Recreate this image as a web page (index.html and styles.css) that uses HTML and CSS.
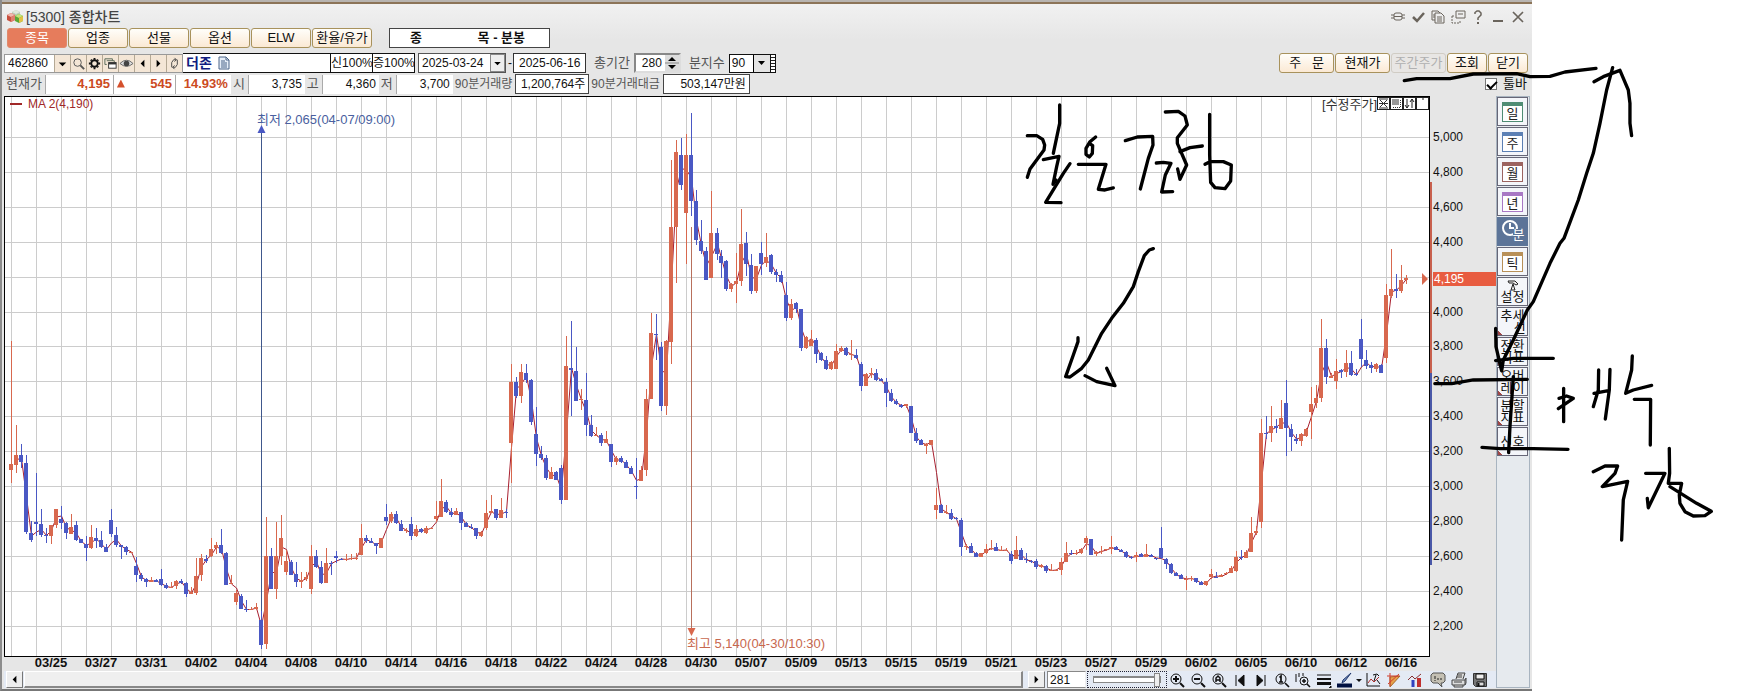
FILE: index.html
```html
<!DOCTYPE html>
<html lang="ko">
<head>
    <meta charset="UTF-8">
    <meta name="viewport" content="width=device-width, initial-scale=1.0">
    <title>[5300] 종합차트</title>
    <link rel="stylesheet" href="styles.css">
</head>
<body>
    <div class="page">
        <main class="window">
            <!-- Title bar -->
            <header class="title-bar">
                <svg class="logo" width="17" height="13" viewBox="0 0 17 13">
                    <path d="M5 2l4-2 4 2v4l-4 2-4-2z" fill="#b9c9b4"/><path d="M5 2l4 2 4-2-4-2z" fill="#dfe8da"/>
                    <path d="M0 5l4-2 4 2v5l-4 2-4-2z" fill="#c8503f"/><path d="M0 5l4 2 4-2-4-2z" fill="#f0b8ae"/><path d="M4 7l4-2v5l-4 2z" fill="#e0806e"/>
                    <path d="M8 6l4-2 4 2v5l-4 2-4-2z" fill="#59a636"/><path d="M8 6l4 2 4-2-4-2z" fill="#c4e47c"/><path d="M12 8l4-2v5l-4 2z" fill="#e2c244"/>
                </svg>
                <h1>[5300] 종합차트</h1>
                <div class="window-buttons">
                    <button aria-label="연결"><svg viewBox="0 0 16 16"><rect x="4" y="4" width="8" height="7" rx="2"/><path d="M1 6h3M1 9h3M12 6h3M12 9h3M4 7.500h8"/></svg></button>
                    <button aria-label="확인"><svg viewBox="0 0 16 16"><path d="M3 8l4 4 7-8" stroke-width="2.500"/></svg></button>
                    <button aria-label="복사"><svg viewBox="0 0 16 16"><path d="M5 11H2V2h6l2 2M5 4h6l3 3v7H5zM7 8h5M7 10h5M7 12h5M4 5v4"/></svg></button>
                    <button aria-label="분리"><svg viewBox="0 0 16 16"><path d="M6 2h9v7H6zM8 5h5"/><path d="M2 7h2M2 7v7h8v-3" stroke-dasharray="2 1"/></svg></button>
                    <button aria-label="도움말"><svg viewBox="0 0 16 16"><path d="M5 5V3.500L7 2h2l2 2v2L8 9v2" stroke-width="1.500"/><path d="M7 14h2" stroke-width="2"/></svg></button>
                    <button aria-label="최소화"><svg viewBox="0 0 16 16"><path d="M3 12h10" stroke-width="2"/></svg></button>
                    <button aria-label="닫기"><svg viewBox="0 0 16 16"><path d="M3 3l10 10M13 3L3 13" stroke-width="1.700"/></svg></button>
                </div>
            </header>

            <!-- Market tabs -->
            <nav class="tabs">
                <button class="btn tab active">종목</button>
                <button class="btn tab">업종</button>
                <button class="btn tab">선물</button>
                <button class="btn tab">옵션</button>
                <button class="btn tab">ELW</button>
                <button class="btn tab">환율/유가</button>
                <div class="mode"><span>종</span><span>목 - 분봉</span></div>
            </nav>

            <!-- Search row -->
            <section class="search-row">
                <div class="code">
                    <input type="text" value="462860" aria-label="종목코드">
                    <button class="mini" aria-label="목록"><svg viewBox="0 0 16 16"><path d="M4 7h8l-4 4z" fill="#000"/></svg></button>
                    <button class="mini" aria-label="검색"><svg viewBox="0 0 16 16"><circle cx="7" cy="7" r="4" fill="none" stroke="#555"/><path d="M10 10l4 4" stroke="#555" stroke-width="2"/></svg></button>
                    <button class="mini" aria-label="설정"><svg viewBox="0 0 16 16"><circle cx="8" cy="8" r="3.500" fill="none" stroke="#111" stroke-width="2"/><path d="M8 2v2M8 12v2M2 8h2M12 8h2M4 4l1 1M11 11l1 1M12 4l-1 1M4 12l1-1" stroke="#111" stroke-width="2"/></svg></button>
                    <button class="mini" aria-label="창"><svg viewBox="0 0 16 16"><path d="M4 9H2V3h8v2M4 5h8v2" fill="none" stroke="#565"/><rect x="6" y="7" width="8" height="6" fill="#fff" stroke="#333"/><path d="M6 8h8" stroke="#333" stroke-width="2"/></svg></button>
                    <button class="mini" aria-label="보기"><svg viewBox="0 0 16 16"><path d="M1 8q7-7 14 0q-7 6-14 0z" fill="#ddd" stroke="#666"/><circle cx="8" cy="8" r="3" fill="#444"/></svg></button>
                    <button class="mini" aria-label="이전"><svg viewBox="0 0 16 16"><path d="M10 4v8L6 8z" fill="#000"/></svg></button>
                    <button class="mini" aria-label="다음"><svg viewBox="0 0 16 16"><path d="M6 4v8l4-4z" fill="#000"/></svg></button>
                    <button class="mini" aria-label="새로고침"><svg viewBox="0 0 16 16"><path d="M5 12V7l2-3h3M11 4v5l-2 3H6M8 2l2 2-2 2M8 10l-2 2 2 2" fill="none" stroke="#444"/></svg></button>
                </div>
                <div class="name">
                    <strong>더존</strong>
                    <svg width="12" height="14" viewBox="0 0 12 14"><path d="M1 1h7l3 3v9H1zM8 1v3h3M3 5h4M3 7h6M3 9h6M3 11h6" fill="#e6eef8" stroke="#4a6488"/></svg>
                </div>
                <div class="ratio"><span>신</span><span>100%</span></div>
                <div class="ratio"><span>증</span><span>100%</span></div>
                <div class="date-from">
                    <input type="text" value="2025-03-24" aria-label="시작일">
                    <button class="drop" aria-label="달력"><svg viewBox="0 0 16 16"><path d="M4 6h8l-4 4z" fill="#000"/></svg></button>
                </div>
                <span>-</span>
                <input class="date-to" type="text" value="2025-06-16" aria-label="종료일">
                <label for="period">총기간</label>
                <div class="spinner">
                    <input type="text" id="period" value="280">
                    <svg width="14" height="16" viewBox="0 0 14 16"><path d="M0 0h14v16H0z" fill="#dcdcdc"/><path d="M0 8h14" stroke="#888"/><path d="M3 6h8L7 2zM3 10h8l-4 4z" fill="#000"/></svg>
                </div>
                <label for="minutes">분지수</label>
                <div class="minutes">
                    <select id="minutes"><option>90</option></select>
                    <svg width="17" height="17" viewBox="0 0 17 17"><path d="M0 0h17v17H0z" fill="#e4e4e4"/><path d="M0.500 0v17" stroke="#000"/><path d="M5 6h7l-3.500 4z" fill="#000"/></svg>
                    <span class="grip"></span>
                </div>
                <div class="actions">
                    <button class="btn wide">주&nbsp;&nbsp; 문</button>
                    <button class="btn wide">현재가</button>
                    <button class="btn wide" disabled>주간주가</button>
                    <button class="btn">조회</button>
                    <button class="btn">닫기</button>
                </div>
            </section>

            <!-- Quote row -->
            <section class="quote-row">
                <span class="caption">현재가</span>
                <output class="cell price">4,195</output>
                <output class="cell price change"><i class="up"></i>545</output>
                <output class="cell price rate">14.93%</output>
                <span class="caption">시</span>
                <output class="cell">3,735</output>
                <span class="caption">고</span>
                <output class="cell">4,360</output>
                <span class="caption">저</span>
                <output class="cell">3,700</output>
                <span class="caption long">90분거래량</span>
                <output class="cell boxed volume">1,200,764주</output>
                <span class="caption long">90분거래대금</span>
                <output class="cell boxed amount">503,147만원</output>
                <label class="toolbar-toggle"><input type="checkbox" checked>툴바</label>
            </section>

            <!-- Chart and tool strip -->
            <div class="body-row">
                <div class="chart-column">
                    <div class="chart-box">
                        <svg id="chart" class="chart" role="img" aria-label="분봉 차트"></svg>
                        <div class="legend">MA 2(4,190)</div>
                        <div class="adjusted">
                            <span>[수정주가]</span>
                            <button aria-label="축소"><svg viewBox="0 0 11 11"><path d="M1 1h9M1 10h9M2 2l7 7M9 2L2 9M1 5.500h9" stroke="#333" fill="none"/></svg></button>
                            <button aria-label="그림자"><svg viewBox="0 0 11 11"><rect x="1" y="1" width="7" height="6" fill="#999"/><path d="M9.500 2v7.500H2" stroke="#333" fill="none" stroke-dasharray="1 1"/></svg></button>
                            <button aria-label="정렬"><svg viewBox="0 0 11 11"><path d="M3 1v9M1 7l2 3 2-3M8 10V1M6 4l2-3 2 3" stroke="#222" fill="none"/></svg></button>
                            <button aria-label="최대화"><svg viewBox="0 0 11 11"><path d="M5 1h2" stroke="#222"/></svg></button>
                        </div>
                    </div>

                    <footer class="bottom-bar">
                        <button class="scroll-btn" aria-label="왼쪽"><svg viewBox="0 0 16 16"><path d="M10 4v8L6 8z" fill="#000"/></svg></button>
                        <div class="scroll-thumb"></div>
                        <button class="scroll-btn" aria-label="오른쪽"><svg viewBox="0 0 16 16"><path d="M6 4v8l4-4z" fill="#000"/></svg></button>
                        <input class="count" type="text" value="281" aria-label="봉 개수">
                        <input class="zoom" type="range" value="100" aria-label="확대">
                        <div class="chart-tools">
                            <button aria-label="확대"><svg viewBox="0 0 16 16"><circle cx="7" cy="7" r="5"/><path d="M4 7h6M7 4v6" stroke-width="2"/><path d="M11 11l4 4" stroke-width="2"/></svg></button>
                            <button aria-label="축소"><svg viewBox="0 0 16 16"><circle cx="7" cy="7" r="5"/><path d="M4 7h6M11 11l4 4" stroke-width="2"/></svg></button>
                            <button aria-label="전체"><svg viewBox="0 0 16 16"><circle cx="7" cy="7" r="5"/><path d="M5 10V6l2-2 2 2v4M5 8h4" stroke-width="1.500"/><path d="M11 11l4 4" stroke-width="2"/></svg></button>
                            <button aria-label="처음"><svg viewBox="0 0 16 16"><path d="M4 3v11"/><path d="M12 3v11L6 8.500z" fill="#111"/></svg></button>
                            <button aria-label="마지막"><svg viewBox="0 0 16 16"><path d="M12 3v11"/><path d="M4 3v11l6-5.500z" fill="#111"/></svg></button>
                            <button aria-label="원래대로"><svg viewBox="0 0 16 16"><circle cx="7" cy="7" r="5"/><path d="M5.500 5.500L7 4v6M5 10h4M11 11l4 4" stroke-width="1.700"/></svg></button>
                            <button aria-label="구간 확대"><svg viewBox="0 0 16 16"><path d="M1 2v8M4 1v4M8 1v3"/><circle cx="9" cy="9" r="4"/><path d="M7 9h4M9 7v4M12 12l3 3" stroke-width="1.500"/></svg></button>
                            <button aria-label="선 굵기"><svg viewBox="0 0 16 16"><path d="M1 3h14"/><path d="M1 7h14" stroke-width="2"/><path d="M1 11.500h14" stroke-width="3"/><path d="M15 14v2h-2z" fill="#111"/></svg></button>
                            <button aria-label="펜"><svg viewBox="0 0 16 16"><path d="M0 13.500h15" stroke="#001040" stroke-width="4"/><path d="M14 1L8 9l-3 2 1-3z" stroke="#20386c" fill="#7890c0"/></svg></button>
                            <button class="narrow" aria-label="펜 색"><svg viewBox="0 0 6 16"><path d="M0 7h6L3 10z" fill="#111" stroke="none"/></svg></button>
                            <button aria-label="차트 설정"><svg viewBox="0 0 16 16"><path d="M2 1v13h13"/><path d="M3 11l3-4 3 3 5-5" stroke="#b03030"/><path d="M8 3l4-1 2 2M11 3l-2 6M12 8l3 4"/></svg></button>
                            <button aria-label="작도"><svg viewBox="0 0 16 16"><path d="M4 15V5l10-1z" fill="#e6a24a" stroke="#a8682c"/><path d="M1 4h12M4 1v13M2 12L13 2" stroke="#d04030"/></svg></button>
                            <button aria-label="지표"><svg viewBox="0 0 16 16"><path d="M1 8l4-4 3 3 6-5" stroke="#883030"/><path d="M6 8v7" stroke="#3040c0" stroke-width="3"/><path d="M12 6v9" stroke="#c03030" stroke-width="4"/></svg></button>
                            <button class="spaced" aria-label="메모"><svg viewBox="0 0 16 16"><path d="M3 1h10l2 2v6l-2 2h-2l1 4-4-4H3L1 9V3z" fill="#c4c0b4" stroke="#555"/><path d="M5 4v3M5 8v1M7 7h2M10 7h2" stroke="#222"/></svg></button>
                            <button aria-label="인쇄"><svg viewBox="0 0 16 16"><path d="M5 7l2-6h7l-2 6M1 8h13v5H1zM3 13v2h9v-2M14 8l1-2v5l-1 2M7 3h4M6 5h5M3 10h8" fill="#ddd" stroke="#444"/></svg></button>
                            <button aria-label="저장"><svg viewBox="0 0 16 16"><path d="M1.500 1.500h13v13h-11l-2-2z" fill="#777" stroke="#333"/><path d="M4 2h8v5H4z" fill="#eee"/><path d="M5 10h7v4H5z" fill="#ddd"/><path d="M6.500 11v3" stroke-width="2"/></svg></button>
                        </div>
                    </footer>
                </div>

                <aside class="tool-strip">
                    <button class="cal green"><span>일</span></button>
                    <button class="cal blue"><span>주</span></button>
                    <button class="cal red"><span>월</span></button>
                    <button class="cal purple"><span>년</span></button>
                    <button class="cal minute">
                        <svg width="18" height="18" viewBox="0 0 18 18"><circle cx="9" cy="9" r="7" fill="none" stroke="#fff" stroke-width="2"/><path d="M9 4v5h4" fill="none" stroke="#fff" stroke-width="2"/></svg>
                        <span>분</span>
                    </button>
                    <button class="cal tick"><span>틱</span></button>
                    <button class="tool">
                        <svg width="12" height="11" viewBox="0 0 12 11"><path d="M1 1h7l3 3-2 1-3-2H2zM6 4L4 10h4L6 4" fill="#eee" stroke="#222"/></svg>
                        설정
                    </button>
                    <button class="tool more">추세<br>&nbsp;&nbsp;&nbsp;&nbsp;선</button>
                    <button class="tool more">전환<br>지표</button>
                    <button class="tool more">오버<br>레이</button>
                    <button class="tool more">분할<br>지표</button>
                    <button class="tool more">신호</button>
                </aside>
            </div>
        </main>
    </div>

    <!-- Pen layer over the whole page -->
    <svg class="ink" viewBox="0 0 1759 691" aria-hidden="true">
        <g transform="translate(1010 95) scale(.3333)">
            <path d="M52 122L80 122 98 133 104 150 102 165 60 222 52 247"/>
            <path d="M149 30V85L130 175"/>
            <path d="M100 194L147 184 140 215 129 268 138 255"/>
            <path d="M180 206L160 235 107 322 153 323"/>
            <path d="M257 126L240 140 228 160 228 178 238 186 247 175 248 152 238 145"/>
            <path d="M205 208H288L265 283 285 285 310 279"/>
            <path d="M346 137L382 126 428 124 429 150 415 190 402 240 391 282"/>
            <path d="M439 204L460 202 483 205 466 240 455 291 488 290"/>
            <path d="M466 51L505 49 525 63 532 90 502 128 502 145 530 210 510 253 503 222"/>
            <path d="M510 170L540 158 577 153"/>
            <path d="M599 58V180L602 262 615 278 645 281 662 258 664 210 640 200 600 200 585 208"/>
            <path d="M430 461L418 465 403 482 385 530 370 575 340 625 305 670 275 715 235 795 215 820 180 846 167 845 190 780 204 740 204 728"/>
            <path d="M225 842L260 860 315 872 290 820"/>
        </g>
        <g transform="translate(1240 0) scale(.3333)">
            <path d="M493 242L530 236 630 236 700 222 830 221 870 230 930 229 975 216 1068 205"/>
            <path d="M1062 245L1090 230 1140 211 1165 270 1170 310 1170 370 1175 407"/>
        </g>
        <g transform="translate(1300 90) scale(.3333)">
            <path d="M938 -67L920 0 900 100 880 190 860 250 835 330 792 445 780 460 750 520 700 635 682 660 640 750 610 810 605 843 588 770 587 715"/>
            <path d="M587 812L640 805 760 805"/>
            <path d="M405 881L455 881 520 870 682 868"/>
        </g>
        <g transform="translate(1300 340) scale(.3333)">
            <path d="M640 110L630 260 626 338"/>
            <path d="M546 322L600 326 700 326 804 328"/>
            <path d="M791 145V245M777 175L800 168 820 175 775 206"/>
            <path d="M896 90L895 150 880 200M930 88L928 150 916 237M882 160L925 152"/>
            <path d="M997 48L995 90 977 160 1000 150 1055 136M1003 178H1052L1051 315"/>
            <path d="M880 395L915 378 953 378 945 400 907 440 983 424 970 480 965 600"/>
            <path d="M1108 325L1109 400 1105 430 1145 430 1138 465 1140 490 1155 515 1180 528 1215 527 1234 514 1190 490 1110 440"/>
            <path d="M1037 400H1095L1045 503 1042 475"/>
        </g>
    </svg>

    <script src="script.js"></script>
</body>
</html>
```

FILE: styles.css
```css
* {
    box-sizing: border-box;
}
body {
    margin: 0;
    background: #fff;
    color: #111;
    font-family: "Liberation Sans", "Noto Sans CJK KR", sans-serif;
    font-size: 12px;
    line-height: 16px;
    position: relative;
}
button, input, select {
    font: inherit;
    color: inherit;
    margin: 0;
    padding: 0;
    border: 0;
    background: none;
    border-radius: 0;
    min-width: 0;
}
svg {
    display: block;
}
.page {
    display: grid;
    grid-template-columns: 27fr 4fr;
}
.window {
    min-width: 0;
    border-left: 2px solid #8c8c8c;
    border-bottom: 2px solid #777;
    background: linear-gradient(#f2f2f2, #e6e6e6 40px);
    padding: 0 2px 1px;
}

/* Title bar */
.title-bar {
    display: flex;
    align-items: center;
    gap: 2px;
    height: 28px;
    margin: 0 -2px;
    padding: 3px 6px 0 5px;
    border-top: 2px solid #b8b4b0;
    box-shadow: inset 0 2px 0 #8c7458;
}
.title-bar h1 {
    margin: 0;
    font-size: 14px;
    font-weight: 500;
    color: #444;
}
.window-buttons {
    display: flex;
    gap: 4px;
    margin-left: auto;
}
.window-buttons svg {
    width: 16px;
    height: 16px;
    fill: none;
    stroke: #6a645c;
}

/* Buttons */
.btn {
    height: 20px;
    width: 40px;
    border: 1px solid #a8925c;
    border-radius: 3px;
    background: linear-gradient(#fffefa, #fbe9d4);
    font-size: 13px;
    line-height: 16px;
    white-space: nowrap;
}
.btn.wide {
    width: 55px;
}
.btn.tab {
    width: 60px;
}
.btn.active {
    background: #e67c5c;
    border-color: #e08a6c;
    color: #fff;
}
.btn:disabled {
    background: #e8e6e4;
    border-color: #d0ccc4;
    color: #b0b0b0;
}
.tabs {
    display: flex;
    gap: 1px;
    padding-left: 3px;
}
.mode {
    display: flex;
    justify-content: space-between;
    width: 161px;
    height: 20px;
    margin-left: 16px;
    padding: 1px 24px 0 20px;
    background: #fff;
    border: 1px solid #444;
    font-size: 13px;
    font-weight: bold;
}

/* Search row */
.search-row {
    display: flex;
    align-items: center;
    height: 20px;
    margin-top: 5px;
    color: #111;
}
.search-row label {
    margin: 0 4px 0 8px;
    color: #555;
    font-size: 13px;
}
.code {
    display: flex;
    height: 19px;
    border: 1px solid #999;
    background: #fff;
}
.code input {
    width: 49px;
    padding-left: 3px;
}
.mini {
    width: 16px;
    height: 17px;
    border-left: 1px solid #b4a894;
    background: #f4e6d6;
}
.mini svg, .drop svg {
    width: 15px;
    height: 15px;
}
.name, .ratio {
    display: flex;
    align-items: center;
    height: 20px;
    border: 1px solid #111;
    background: #fff;
}
.name {
    width: 148px;
    gap: 6px;
    padding-left: 3px;
    border-left: 0;
}
.name strong {
    color: #101c80;
    font-size: 14px;
}
.ratio {
    width: 42px;
    justify-content: space-between;
    border-left: 0;
    white-space: nowrap;
}
.date-from {
    display: flex;
    width: 88px;
    height: 20px;
    margin: 0 2px 0 3px;
    border: 1px solid #555;
    background: #fff;
}
.date-from input {
    flex: 1;
    padding-left: 3px;
}
.drop {
    width: 15px;
    border: 1px solid #888;
    background: #eee;
}
.drop svg {
    width: 13px;
}
.date-to {
    width: 73px;
    height: 20px;
    margin-left: 1px;
    padding-left: 5px;
    border: 1px solid #333;
    background: #fff;
}
.spinner {
    display: flex;
    width: 47px;
    height: 20px;
    border: 2px solid #888;
    border-right-color: #ddd;
    border-bottom-color: #ddd;
    background: #fff;
}
.spinner input {
    flex: 1;
    padding-right: 3px;
    text-align: right;
}
.minutes {
    display: flex;
    width: 47px;
    height: 19px;
    border: 1px solid #111;
    background: #fff;
}
.minutes select {
    flex: 1;
    appearance: none;
    padding-left: 2px;
}
.grip {
    width: 5px;
    border-left: 1px solid #111;
    background: repeating-linear-gradient(#fff 0 2px, #222 2px 3px);
}
.search-row .minutes {
    margin-right: auto;
}
.actions {
    display: flex;
    gap: 1px;
    padding-right: 2px;
}

/* Quote row */
.quote-row {
    display: flex;
    align-items: center;
    height: 20px;
    margin-top: 1px;
}
.caption {
    padding: 0 3px 0 2px;
    color: #555;
    font-size: 13px;
    white-space: nowrap;
}
.caption.long {
    font-size: 12px;
}
.cell {
    width: 57px;
    height: 19px;
    padding: 1px 3px 0 0;
    background: #fff;
    border-left: 1px solid #aaa;
    text-align: right;
    white-space: nowrap;
}
.price {
    width: 68px;
    color: #cc4a22;
    font-size: 13px;
    font-weight: bold;
}
.change {
    display: flex;
    justify-content: space-between;
    width: 62px;
    padding-left: 3px;
}
.rate {
    width: 56px;
}
.up {
    margin-top: 4px;
    width: 8px;
    height: 8px;
    background: #d4502c;
    clip-path: polygon(50% 0, 100% 100%, 0 100%);
}
.boxed {
    height: 20px;
    border: 1px solid #444;
}
.volume {
    width: 74px;
}
.amount {
    width: 87px;
}
.toolbar-toggle {
    display: flex;
    align-items: center;
    gap: 6px;
    margin-left: auto;
    padding-right: 3px;
    font-size: 13px;
}
.toolbar-toggle input {
    appearance: none;
    width: 12px;
    height: 12px;
    border: 1px solid #777;
    background: #fff;
}
.toolbar-toggle input:checked::before {
    content: "";
    display: block;
    width: 8px;
    height: 4px;
    margin: 2px 0 0 1px;
    border: solid #000;
    border-width: 0 0 2px 2px;
    transform: rotate(-45deg);
}

/* Chart */
.body-row {
    display: flex;
    margin-top: 2px;
}
.chart-column {
    flex: 1;
    min-width: 0;
}
.chart-box {
    position: relative;
}
.chart {
    width: 100%;
    height: 575px;
    overflow: visible;
}
.chart text {
    font-size: 12px;
    fill: #111;
}
.chart .date {
    font-size: 13px;
    font-weight: bold;
    text-anchor: middle;
}
.chart .low-note {
    font-size: 13px;
    fill: #4a5fa0;
}
.chart .high-note {
    font-size: 13px;
    fill: #c8684e;
}
.chart .tag {
    fill: #fff;
}
.legend {
    position: absolute;
    left: 6px;
    top: 0;
    display: flex;
    align-items: center;
    gap: 6px;
    color: #a02828;
}
.legend::before {
    content: "";
    width: 12px;
    height: 2px;
    background: #a02828;
}
.adjusted {
    position: absolute;
    right: 67px;
    top: 1px;
    display: flex;
    color: #333;
    font-size: 13px;
}
.adjusted button {
    width: 13px;
    height: 13px;
    border: 1px solid #222;
    background: #fff;
}

/* Bottom bar */
.bottom-bar {
    display: flex;
    align-items: center;
    height: 17px;
    padding-left: 2px;
    background: #e4eaf4;
}
.scroll-btn {
    width: 17px;
    height: 17px;
    border: 1px solid #fff;
    border-right-color: #777;
    border-bottom-color: #777;
    background: #eee;
}
.scroll-btn svg {
    width: 15px;
    height: 15px;
}
.scroll-thumb {
    flex: 1;
    height: 17px;
    margin: 0 5px 0 1px;
    border: 1px solid #fff;
    border-right: 2px solid #888;
    border-bottom: 2px solid #888;
    background: #efefef;
}
.count {
    width: 39px;
    height: 17px;
    margin: 0 1px 0 2px;
    padding-left: 2px;
    border: 1px solid #888;
    border-right-color: #eee;
    background: #fff;
}
.zoom {
    appearance: none;
    width: 80px;
    height: 17px;
    padding: 0 5px;
    border: 1px dotted #223;
}
.zoom::-webkit-slider-runnable-track {
    height: 7px;
    border: 1px solid #888;
    border-top-width: 2px;
    background: #fff;
}
.zoom::-webkit-slider-thumb {
    appearance: none;
    width: 6px;
    height: 14px;
    margin-top: -5px;
    border: 1px solid #888;
    background: #eee;
}
.chart-tools {
    display: flex;
    gap: 5px;
    padding: 0 8px 0 2px;
}
.chart-tools button {
    width: 16px;
    height: 16px;
}
.chart-tools .narrow {
    width: 6px;
    margin: 0 -2px;
}
.chart-tools .spaced {
    margin-left: 2px;
}
.chart-tools svg {
    width: 100%;
    height: 16px;
    fill: none;
    stroke: #111;
}

/* Tool strip */
.tool-strip {
    display: flex;
    flex-direction: column;
    gap: 1px;
    width: 34px;
    border: 1px solid #a8b4c0;
    background: #e6eaee;
}
.tool-strip button {
    flex: none;
    display: flex;
    flex-direction: column;
    align-items: center;
    justify-content: center;
    width: 31px;
    height: 29px;
    border: 1px solid #667;
    background: #f4f6fa;
    font-size: 13px;
    line-height: 12px;
}
.cal span {
    width: 21px;
    height: 20px;
    padding-top: 2px;
    border: 1px solid;
    border-top-width: 4px;
    background: #fff;
    border-color: var(--tone);
    color: #222;
}
.green { --tone: #4f8c74; }
.blue { --tone: #5c80b4; }
.red { --tone: #9c6460; }
.purple { --tone: #a878c4; }
.tick { --tone: #b89058; }
.tool-strip .minute {
    flex-direction: row;
    align-items: flex-start;
    background: #5c7498;
    border-color: #5c7498;
}
.minute span {
    width: auto;
    height: auto;
    margin: 11px 0 0 -6px;
    padding: 0;
    border: 0;
    background: #5c7498;
    color: #fff;
}
.minute svg {
    flex: none;
    margin-top: 1px;
}
.tool-strip .more {
    background: linear-gradient(45deg, #a04848 3px, #f4f6fa 3px);
}

/* Pen layer */
.ink {
    position: absolute;
    left: 0;
    top: 0;
    width: 100%;
    pointer-events: none;
    fill: none;
    stroke: #000;
    stroke-width: 10;
    stroke-linecap: round;
    stroke-linejoin: round;
}
```

FILE: script.js
```js
// Each candle: direction (u/d), then high, body top, body bottom, low in chart units
const candles = `
u341,464,470,483 u425,455,465,473 d444,455,462,468 d455,463,532,534 d521,533,540,542
d473,522,524,536 d509,524,535,537 d528,535,536,543 u525,525,536,544 u509,509,525,528
d506,519,523,529 d522,523,533,539 u514,527,534,534 d521,525,540,541 d539,539,543,543
d536,544,548,561 u525,537,548,549 d528,538,541,548 d531,540,547,548 d544,547,552,552
d509,520,534,537 d527,535,545,547 d545,545,547,559 d546,547,552,555 u552,552,553,553
d557,566,575,582 d573,575,579,581 d578,579,582,587 u577,580,582,582 d579,580,582,582
d569,579,585,586 d583,585,588,589 u582,587,588,588 u580,581,586,589 d579,581,583,584
d582,583,594,597 u587,592,594,594 u558,576,593,595 u554,558,575,581 d555,559,561,563
u538,549,556,557 u542,545,548,554 d529,545,553,554 d552,553,585,585 u575,583,584,584
u590,593,602,605 d594,596,609,609 d600,609,610,612 u607,609,610,610 u603,607,609,610
d611,620,645,649 u517,556,644,649 d548,556,589,589 u522,556,589,599 u515,538,556,565
u550,561,572,575 d560,562,575,575 d562,574,582,587 u572,580,582,588 u572,577,579,581
u545,556,589,594 d550,556,567,568 d561,567,583,584 u548,563,583,583 d561,563,564,575
d551,556,558,563 d558,559,560,560 u554,559,560,561 u554,558,559,560 u553,558,559,560
u524,538,555,555 d535,538,541,543 d538,541,543,543 d543,543,546,554 u538,538,548,548
d504,517,521,525 u512,514,521,523 d511,514,523,524 d520,524,531,531 u528,530,531,533
d517,524,536,540 u525,529,536,537 d528,529,532,533 u526,528,533,534 u528,528,529,529
u501,516,519,522 u479,501,517,517 d500,502,512,513 d508,512,515,517 u508,511,515,515
d512,512,523,530 d522,523,527,527 d524,527,528,529 d528,528,536,539 u531,532,536,537
u500,513,528,530 u495,511,513,513 d509,509,518,520 u498,510,518,518 d509,512,513,518
u364,382,443,483 d377,382,396,398 u364,372,396,403 d364,373,380,383 d379,380,422,425
d407,434,454,466 d446,454,458,460 d455,458,478,480 u467,472,479,479 d471,472,480,480
d465,468,500,504 u336,366,500,500 d321,368,370,416 d347,371,401,401 u389,399,400,410
d373,400,425,436 d415,425,436,437 u427,435,436,436 d433,435,443,446 u431,439,443,443
d444,444,462,467 u456,458,462,465 d456,458,462,463 d460,462,468,468 d466,468,474,474
d458,486,487,499 u466,470,481,481 u389,399,470,476 u313,333,399,399 d314,334,335,360
d342,347,406,411 u340,341,406,415 u160,227,342,364 u140,152,227,283 d138,155,185,190
u134,155,213,264 d113,155,201,216 d190,201,240,245 d220,241,251,254 d247,251,280,280
u191,233,278,278 d228,233,254,260 d250,256,263,278 d260,261,289,291 u283,284,289,292
u253,281,284,303 u209,244,281,286 d232,243,264,276 d254,265,291,294 u266,266,291,293
d242,253,264,275 u233,257,263,267 d254,255,272,274 d269,272,275,282 d271,275,282,283
d282,295,318,321 u299,304,318,320 d302,303,309,313 d309,309,348,351 u336,337,348,349
u330,340,346,346 d338,340,354,363 d352,353,360,361 d356,360,369,370 u361,362,369,370
u344,351,369,369 u346,348,351,352 d347,348,355,356 u340,354,355,360 d349,355,358,359
d362,364,386,391 u373,374,386,386 u368,373,374,378 d369,373,380,381 d378,379,381,381
d378,382,393,407 d389,393,401,402 d399,401,404,405 d404,405,407,408 u404,404,406,408
d406,406,433,433 d428,433,441,443 d439,440,445,445 u443,444,446,454 u440,440,445,445
u488,505,510,519 d504,505,513,513 u505,512,513,514 d509,513,519,520 d517,518,519,520
d518,520,547,556 u544,546,547,550 d543,546,553,553 d552,553,557,557 u553,553,557,557
u544,549,553,554 u540,548,549,550 d543,547,551,551 u546,550,551,551 u548,550,551,551
d551,554,561,564 u536,550,559,559 d548,550,560,560 d553,559,560,563 d560,561,562,563
d559,561,567,569 u564,565,567,568 d565,566,571,573 u564,570,571,571 u569,570,571,571
u558,562,570,575 u542,553,562,562 d550,553,554,555 u550,553,554,555 u548,549,553,554
u536,538,543,550 d539,539,555,555 u551,552,554,556 u546,551,552,554 u549,549,550,551
u536,547,549,554 d546,547,550,550 d549,550,552,552 d551,552,557,558 d556,557,558,559
u552,555,557,562 d553,554,557,557 u544,554,557,557 d554,555,557,557 d558,558,559,560
d527,548,558,559 d558,559,564,569 d563,564,573,574 d572,573,576,576 d574,575,579,579
u576,579,580,590 u576,578,579,581 d578,578,582,583 d581,582,585,585 u581,581,585,586
u569,574,577,579 d572,577,578,578 u574,575,577,577 u572,573,574,575 u566,568,573,573
u551,557,571,572 d550,557,558,560 u550,552,558,558 u517,533,552,552 u526,531,533,535
u419,433,522,528 d416,433,434,439 u406,426,433,442 d419,426,428,433 u400,418,429,429
d380,403,428,456 d424,429,437,451 d434,439,441,444 u433,434,441,446 u428,429,436,437
u387,404,412,439 u385,398,403,408 u319,348,398,402 d339,348,377,384 u373,376,378,378
u359,371,381,389 d369,370,372,378 u350,363,372,377 d351,363,375,376 d369,374,375,376
d319,339,359,367 d350,360,366,369 d362,365,368,373 u363,364,369,372 d364,365,373,373
u284,295,358,363 u249,289,296,298 d274,289,291,298 u265,280,291,293 u275,278,280,284
`.trim().split(/\s+/).map(function (row) {
    const v = row.slice(1).split(',').map(Number);
    return { up: row[0] === 'u', high: v[0], top: v[1], bottom: v[2], low: v[3] };
});

const dates = ['03/25', '03/27', '03/31', '04/02', '04/04', '04/08', '04/10', '04/14', '04/16', '04/18',
    '04/22', '04/24', '04/28', '04/30', '05/07', '05/09', '05/13', '05/15', '05/19', '05/21',
    '05/23', '05/27', '05/29', '06/02', '06/05', '06/10', '06/12', '06/16'];

const RED = '#d8684e';
const BLUE = '#4a58c4';
const AXIS_W = 66;
const PLOT_H = 561;
const TOP = 96;

const svg = document.getElementById('chart');

function add(tag, attrs, text) {
    const el = document.createElementNS('http://www.w3.org/2000/svg', tag);
    for (const key in attrs) el.setAttribute(key, attrs[key]);
    if (text) el.textContent = text;
    svg.appendChild(el);
}

function rect(x, y, w, h, fill) {
    add('rect', { x: x, y: y, width: w, height: h, fill: fill, 'shape-rendering': 'crispEdges' });
}

function draw() {
    svg.innerHTML = '';
    const plotW = Math.round(svg.clientWidth - AXIS_W);
    const scale = plotW / 1427;
    const xOf = i => Math.round((7 + 5 * i + (i > 140 ? 1 : 0)) * scale);
    const yOf = price => Math.round(137 - TOP + (5000 - price) * 0.1745);

    rect(0, 0, plotW, PLOT_H, '#fff');

    // Grid
    for (let i = 0; i < candles.length; i += 5) rect(xOf(i), 0, 1, PLOT_H, '#ccc');
    for (let p = 5000; p >= 2200; p -= 200) {
        rect(0, yOf(p), plotW, 1, '#ccc');
        add('text', { x: plotW + 3, y: yOf(p) + 4 }, p.toLocaleString('en-US'));
    }

    // Moving average of the last two closes
    const closes = candles.map(c => (c.up ? c.top : c.bottom) - TOP);
    const points = closes.slice(1).map((y, i) => (xOf(i + 1) + 0.5) + ',' + (y + closes[i]) / 2);
    add('polyline', { points: points.join(' '), fill: 'none', stroke: '#a82030' });

    // Candles
    candles.forEach(function (c, i) {
        const color = c.up ? RED : BLUE;
        rect(xOf(i), c.high - TOP, 1, c.low - c.high, color);
        rect(xOf(i) - 2, c.top - TOP, 4, c.bottom - c.top, color);
    });

    // Lowest and highest price markers
    const lowX = xOf(50);
    rect(lowX, 30, 1, 485, '#40588c');
    add('path', { d: `M${lowX - 3.5} 37h8l-4-8z`, fill: BLUE });
    add('text', { x: lowX - 4, y: 28, class: 'low-note' }, '최저 2,065(04-07/09:00)');
    const highX = xOf(136);
    rect(highX, 131, 1, 403, '#b8705c');
    add('path', { d: `M${highX - 3.5} 532h8l-4 8z`, fill: RED });
    add('text', { x: highX - 4, y: 552, class: 'high-note' }, '최고 5,140(04-30/10:30)');

    // Frame, day range and current price
    rect(0, 0, plotW, 1, '#000');
    rect(0, 0, 1, PLOT_H, '#000');
    rect(0, PLOT_H - 1, plotW, 1, '#000');
    rect(plotW - 1, 0, 1, PLOT_H, '#000');
    rect(plotW, 86, 2, 191, '#c8604e');
    rect(plotW, 277, 2, 192, '#4a58a8');
    rect(plotW + 3, 176, AXIS_W - 3, 14, '#e85c40');
    add('path', { d: `M${plotW - 8} 177v12l6-6z`, fill: RED });
    add('text', { x: plotW + 4, y: 187, class: 'tag' }, '4,195');

    dates.forEach((d, k) => add('text', { x: xOf(8 + 10 * k), y: 571, class: 'date' }, d));
}

draw();
window.addEventListener('resize', draw);
```
